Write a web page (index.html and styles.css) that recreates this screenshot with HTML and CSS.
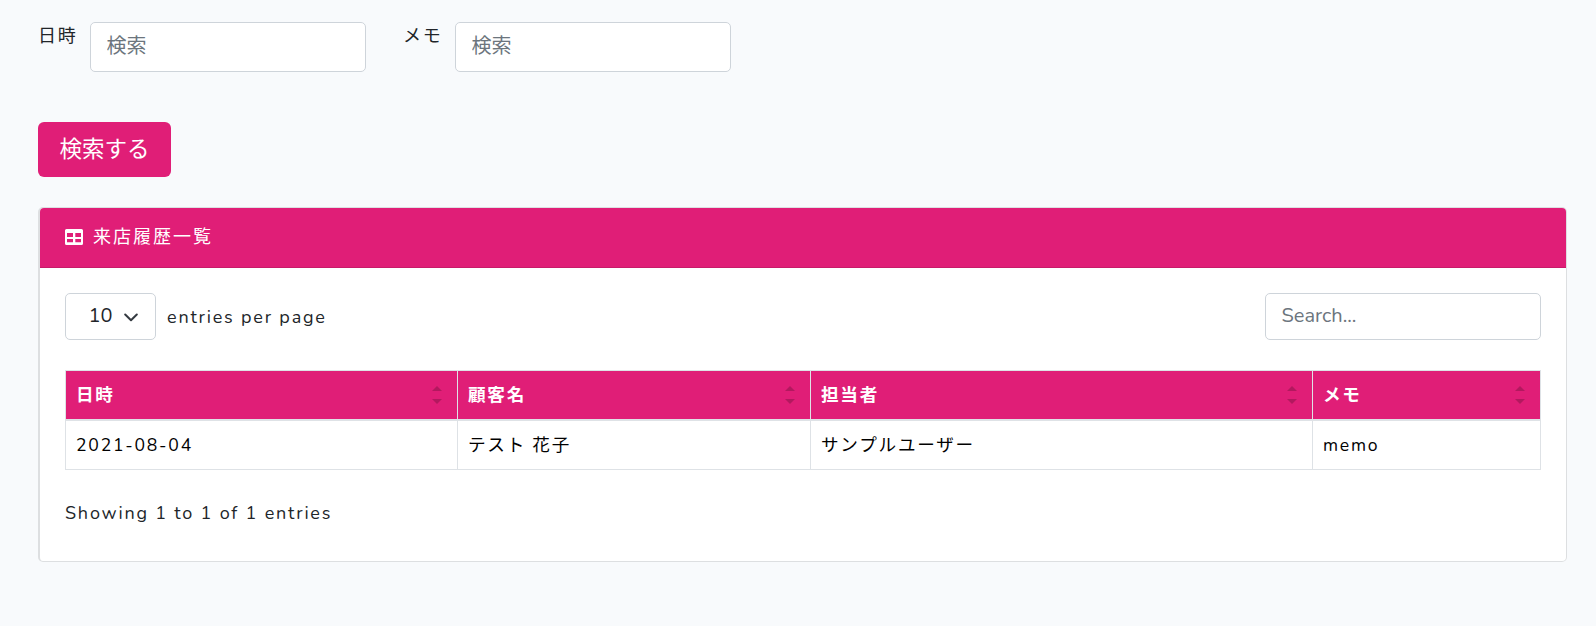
FILE: index.html
```
<!DOCTYPE html>
<html lang="ja">
<head>
<meta charset="utf-8">
<title>来店履歴一覧</title>
<link rel="stylesheet" href="styles.css">
</head>
<body>
<main class="page">
  <form class="filters">
    <div class="fields">
      <label class="field"><span class="field-label">日時</span><input class="control" type="text" placeholder="検索"></label>
      <label class="field"><span class="field-label">メモ</span><input class="control" type="text" placeholder="検索"></label>
    </div>
    <button class="submit" type="button">検索する</button>
  </form>
  <section class="card">
    <header class="card-header">
      <svg class="card-icon" viewBox="0 0 18 16"><path fill="currentColor" fill-rule="evenodd" d="M1.500 0h15A1.500 1.500 0 0 1 18 1.500v13a1.500 1.500 0 0 1-1.500 1.500h-15A1.500 1.500 0 0 1 0 14.500v-13A1.500 1.500 0 0 1 1.500 0zM2 4v4h6V4zM10.300 4v4H16V4zM2 10v3.300h6V10zM10.300 10v3.300H16V10z"/></svg>
      <span class="card-title">来店履歴一覧</span>
    </header>
    <div class="card-body">
      <div class="toolbar">
        <div class="per-page">
          <div class="select"><span class="select-value">10</span><svg class="chevron" viewBox="0 0 14 9"><path d="M1.200 1.500 7 7.200l5.800-5.700" fill="none" stroke="currentColor" stroke-width="2" stroke-linecap="round" stroke-linejoin="round"/></svg></div>
          <span class="per-page-text">entries per page</span>
        </div>
        <input class="control search" type="text" placeholder="Search...">
      </div>
      <table class="table">
        <colgroup><col class="col-date"><col class="col-customer"><col class="col-staff"><col class="col-memo"></colgroup>
        <thead>
          <tr>
            <th><div class="sorter"><span>日時</span><i class="arrows"></i></div></th>
            <th><div class="sorter"><span>顧客名</span><i class="arrows"></i></div></th>
            <th><div class="sorter"><span>担当者</span><i class="arrows"></i></div></th>
            <th><div class="sorter"><span>メモ</span><i class="arrows"></i></div></th>
          </tr>
        </thead>
        <tbody>
          <tr><td class="date">2021-08-04</td><td>テスト 花子</td><td>サンプルユーザー</td><td class="memo">memo</td></tr>
        </tbody>
      </table>
      <div class="info">Showing 1 to 1 of 1 entries</div>
    </div>
  </section>
</main>
</body>
</html>
```
FILE: styles.css
```
* { box-sizing: border-box; }
body {
  margin: 0;
  background: #f8fafc;
  color: #212529;
  font-family: Nunito, "Noto Sans CJK JP", sans-serif;
  font-size: 18px;
  font-weight: 400;
  line-height: 28px;
  letter-spacing: 1.8px;
}
.page { padding: 22px 29px 0 38px; }
.filters { display: flex; flex-direction: column; align-items: flex-start; gap: 50px; }
.fields { display: flex; gap: 37px; }
.field { display: flex; align-items: flex-start; }
.field-label { width: 52px; }
.control {
  width: 276px;
  height: 50px;
  padding: 0 15.500px 2px;
  border: 1px solid #ced4da;
  border-radius: 5px;
  background: #fff;
  color: #495057;
  font: 400 20px/30px Nunito, "Noto Sans CJK JP", sans-serif;
}
.control::placeholder { color: #6c757d; opacity: 1; }
.submit {
  width: 133px;
  height: 55px;
  padding: 0;
  border: 0;
  border-radius: 6px;
  background: #e01e77;
  color: #fff;
  font: 400 22.5px/32px Nunito, "Noto Sans CJK JP", sans-serif;
}
.card {
  height: 355px;
  margin-top: 30px;
  border: 1px solid #dddfe1;
  border-left-width: 2px;
  border-radius: 5px;
  background: #fff;
}
.card-header {
  display: flex;
  align-items: center;
  gap: 10px;
  height: 60px;
  padding: 0 25px 1px;
  border-bottom: 1px solid #c71b69;
  border-radius: 4px 4px 0 0;
  background: #e01e77;
  color: #fff;
}
.card-icon { width: 18px; height: 16px; }
.card-title { letter-spacing: 2px; }
.card-body { padding: 25px; }
.toolbar { display: flex; justify-content: space-between; height: 47px; }
.per-page { display: flex; align-items: center; gap: 11px; }
.select {
  display: flex;
  align-items: center;
  gap: 11px;
  width: 91px;
  height: 47px;
  padding: 0 0 2px 22.500px;
  border: 1px solid #ced4da;
  border-radius: 5px;
  font-size: 20px;
  letter-spacing: 0;
}
.chevron { width: 14px; height: 9px; margin-top: 3px; color: #343a40; }
.search { height: 47px; }
.table {
  width: 1476px;
  margin-top: 30px;
  border-collapse: collapse;
  table-layout: fixed;
  color: #000;
  font-size: 17.6px;
  letter-spacing: 1.76px;
}
.col-date { width: 392px; }
.col-customer { width: 353px; }
.col-staff { width: 502px; }
.col-memo { width: 228px; }
.table th, .table td { height: 50px; padding: 0 10px; border: 1px solid #dee2e6; text-align: left; }
.table th { border-bottom-width: 2px; height: 49px; background: #e01e77; color: #fff; font-weight: 700; }
.sorter { display: flex; align-items: center; justify-content: space-between; padding-right: 5px; }
.arrows { display: flex; flex-direction: column; gap: 8px; }
.arrows::before, .arrows::after { content: ""; border: 5px solid transparent; }
.arrows::before { border-top: 0; border-bottom-color: #b3185f; }
.arrows::after { border-bottom: 0; border-top-color: #b3185f; }
.info { margin-top: 29px; }
```
